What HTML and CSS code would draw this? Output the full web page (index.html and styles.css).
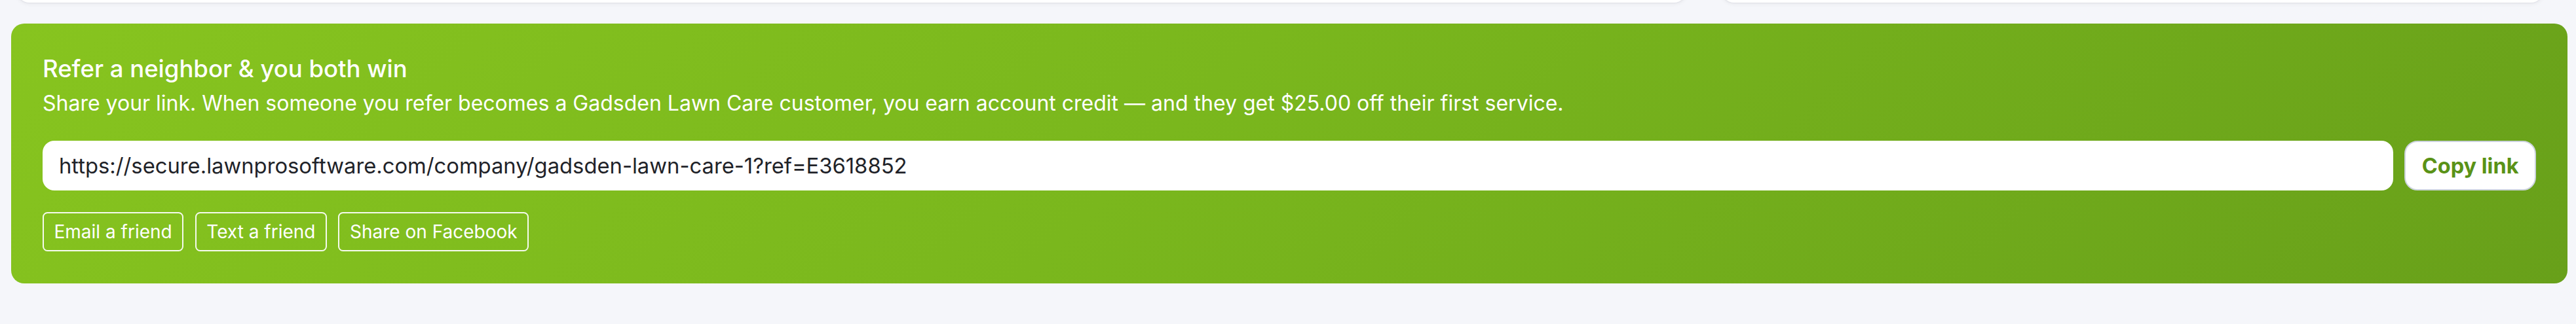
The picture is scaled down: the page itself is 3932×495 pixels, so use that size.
FILE: index.html
```html
<!DOCTYPE html>
<html lang="en">
<head>
<meta charset="utf-8">
<title>Refer a neighbor</title>
<link rel="stylesheet" href="styles.css">
</head>
<body>
  <div class="top-row">
    <div class="top-card"></div>
    <div class="top-card"></div>
  </div>
  <section class="referral">
    <h2 class="referral-title">Refer a neighbor &amp; you both win</h2>
    <p class="referral-text">Share your link. When someone you refer becomes a Gadsden Lawn Care customer, you earn account credit — and they get $25.00 off their first service.</p>
    <div class="link-row">
      <input class="link-input" type="text" readonly value="https://secure.lawnprosoftware.com/company/gadsden-lawn-care-1?ref=E3618852">
      <button class="copy-btn" type="button">Copy link</button>
    </div>
    <div class="share-row">
      <button class="share-btn" type="button">Email a friend</button>
      <button class="share-btn" type="button">Text a friend</button>
      <button class="share-btn" type="button">Share on Facebook</button>
    </div>
  </section>
</body>
</html>
```

FILE: styles.css
```css
html, body {
  margin: 0;
  padding: 0;
}

body {
  background: #f5f6fa;
  font-family: Inter, "Noto Sans", sans-serif;
  width: 3932px;
  height: 495px;
  overflow: hidden;
  box-sizing: border-box;
  padding: 0 13px 0 17px;
}

.top-row {
  display: grid;
  grid-template-columns: 2550fr 1256fr;
  gap: 52px;
  margin: -60px 36px 0 8px;
}

.top-card {
  height: 64px;
  background: #ffffff;
  border-radius: 20px;
  box-shadow: 0 2px 6px rgba(15, 23, 42, 0.06), 0 1px 2px rgba(15, 23, 42, 0.05);
}

.referral {
  margin-top: 32px;
  border-radius: 20px;
  padding: 47px 48px 49px 48px;
  background: linear-gradient(135deg, #87c41f 0%, #7ab71d 45%, #68a01a 100%);
  color: #ffffff;
}

.referral-title {
  margin: 0 0 5px 0;
  font-size: 36.5px;
  line-height: 1.25;
  font-weight: 450;
}

.referral-text {
  margin: 0;
  font-size: 32px;
  line-height: 1.5;
  font-weight: 400;
}

.link-row {
  display: flex;
  gap: 17px;
  margin-top: 33.5px;
}

.link-input {
  flex: 1;
  min-width: 0;
  height: 76px;
  box-sizing: border-box;
  border: none;
  border-radius: 18px;
  background: #ffffff;
  padding: 0 25px;
  font-family: inherit;
  font-size: 32.75px;
  color: #1f2329;
  outline: none;
}

.copy-btn {
  height: 76px;
  box-sizing: border-box;
  border: 2.5px solid #ccd3dd;
  border-radius: 20px;
  background: #ffffff;
  padding: 0 24.5px;
  font-family: inherit;
  font-size: 32.5px;
  font-weight: 700;
  color: #5a9217;
  cursor: pointer;
}

.share-row {
  display: flex;
  gap: 17.5px;
  margin-top: 33px;
}

.share-btn {
  height: 60px;
  box-sizing: border-box;
  border: 2.5px solid rgba(255, 255, 255, 0.92);
  border-radius: 7.5px;
  background: transparent;
  padding: 0 15.5px;
  font-family: inherit;
  font-size: 28px;
  font-weight: 400;
  color: #ffffff;
  cursor: pointer;
}
```
